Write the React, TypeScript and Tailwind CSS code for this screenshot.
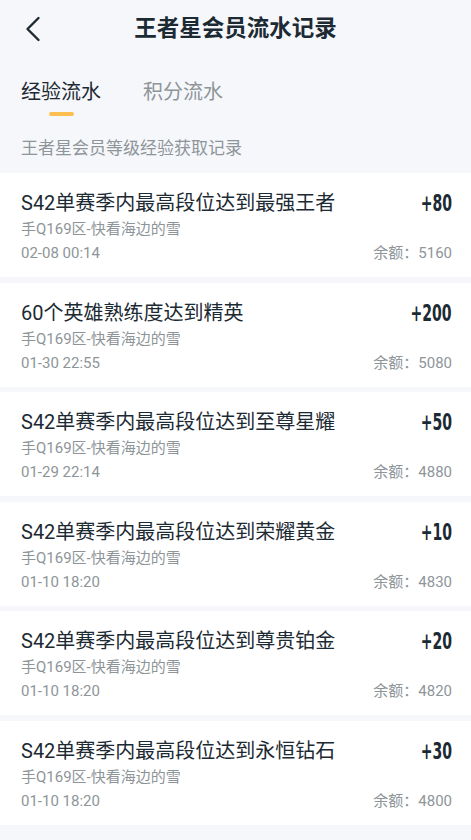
const records = [
  { title: "S42单赛季内最高段位达到最强王者", time: "02-08 00:14", amount: "+80", balance: "5160" },
  { title: "60个英雄熟练度达到精英", time: "01-30 22:55", amount: "+200", balance: "5080" },
  { title: "S42单赛季内最高段位达到至尊星耀", time: "01-29 22:14", amount: "+50", balance: "4880" },
  { title: "S42单赛季内最高段位达到荣耀黄金", time: "01-10 18:20", amount: "+10", balance: "4830" },
  { title: "S42单赛季内最高段位达到尊贵铂金", time: "01-10 18:20", amount: "+20", balance: "4820" },
  { title: "S42单赛季内最高段位达到永恒钻石", time: "01-10 18:20", amount: "+30", balance: "4800" },
]

const font = "font-['Roboto','Noto_Sans_CJK_SC',sans-serif]"

export default function App() {
  return (
    <div className={`min-h-[840px] w-full bg-[#f6f7fb] ${font}`}>
      {/* header */}
      <div className="relative flex h-[56px] items-center justify-center">
        <svg className="absolute left-[24px] top-[16px]" width="18" height="26" viewBox="0 0 18 26" fill="none">
          <path d="M14.5 2 L3.5 13 L14.5 24" stroke="#1c2a33" strokeWidth="2.4" strokeLinecap="round" strokeLinejoin="round" />
        </svg>
        <h1 className="text-[22.5px] font-bold leading-none text-[#1c2a33]">王者星会员流水记录</h1>
      </div>

      {/* tabs */}
      <div className="flex gap-[42px] px-[21px] pt-[24px]">
        <div className="flex flex-col items-center">
          <span className="text-[20px] leading-[24px] text-[#1c2a33]">经验流水</span>
          <span className="mt-[8px] h-[4px] w-[25px] rounded-full bg-[#fdbf50]" />
        </div>
        <span className="text-[20px] leading-[24px] text-[#8e9599]">积分流水</span>
      </div>

      <p className="mt-[20px] mb-[13px] px-[21px] text-[17px] leading-[24px] text-[#8e9599]">王者星会员等级经验获取记录</p>

      {/* list */}
      <div className="flex flex-col gap-[5.6px]">
        {records.map((r, i) => (
          <div key={i} className="h-[104px] bg-white pl-[21px] pr-[19px] pt-[18px]">
            <div className="flex items-center justify-between">
              <span className="text-[20px] leading-[24px] text-[#1c2a33]">{r.title}</span>
              <span className="inline-block origin-right scale-x-[0.68] font-['DejaVu_Sans_Condensed',sans-serif] text-[23px] font-bold leading-[24px] text-[#1c2a33]">
                {r.amount}
              </span>
            </div>
            <div className="mt-[3px] text-[15px] leading-[22px] text-[#8e9599]">手Q169区-快看海边的雪</div>
            <div className="mt-[2px] flex justify-between text-[15px] leading-[22px] text-[#8e9599]">
              <span>{r.time}</span>
              <span>余额：{r.balance}</span>
            </div>
          </div>
        ))}
      </div>
    </div>
  )
}
